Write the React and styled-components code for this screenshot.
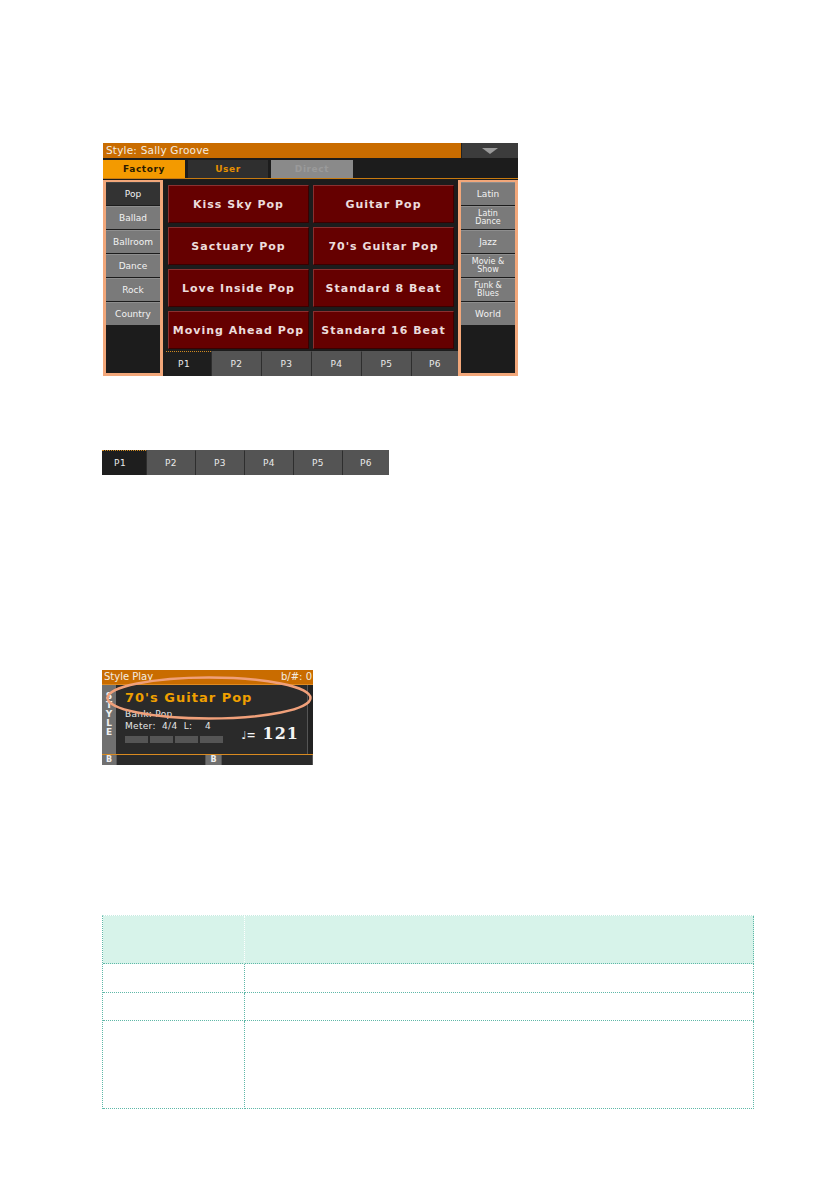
import React from "react";
import styled, { createGlobalStyle } from "styled-components";

const Global = createGlobalStyle`
  html, body { margin: 0; padding: 0; background: #fff; }
  body { font-family: "DejaVu Sans", "Liberation Sans", sans-serif; }
`;

const Page = styled.div`
  width: 839px;
  min-height: 1191px;
  padding: 143px 0 0 102px;
  box-sizing: border-box;
  display: flex;
  flex-direction: column;
  align-items: flex-start;
`;

/* ---------- Screen 1 ---------- */
const Screen = styled.div`
  margin-left: 1px;
  width: 415px;
  height: 233px;
  background: #1c1c1c;
  display: flex;
  flex-direction: column;
  font-family: "DejaVu Sans", sans-serif;
`;

const TitleBar = styled.div`
  height: 15px;
  display: flex;
`;

const TitleText = styled.div`
  flex: 1;
  background: #c96c00;
  color: #f4ece0;
  font-size: 10.5px;
  line-height: 15px;
  padding-left: 3px;
  letter-spacing: 0.2px;
`;

const MenuButton = styled.div`
  width: 56px;
  background: #3c3c3c;
  border-left: 1px solid #222;
  display: flex;
  align-items: center;
  justify-content: center;
`;

const TabsRow = styled.div`
  height: 18px;
  margin-top: 2px;
  display: flex;
  gap: 3px;
  border-bottom: 1px solid #c77a10;
`;

const Tab = styled.div`
  width: ${(p) => p.$w}px;
  background: ${(p) => (p.$active ? "#f39a00" : p.$disabled ? "#8a8a8a" : "#2f2f2f")};
  color: ${(p) => (p.$active ? "#2a1a00" : p.$disabled ? "#9a9a9a" : "#e59000")};
  font-size: 9px;
  font-weight: bold;
  letter-spacing: 0.6px;
  text-align: center;
  line-height: 18px;
`;

const Main = styled.div`
  flex: 1;
  display: flex;
  margin-top: 1px;
`;

const SideColumn = styled.div`
  width: 60px;
  box-sizing: border-box;
  border: 3px solid #f2a77a;
  border-top-width: 2px;
  background: #1c1c1c;
  display: flex;
  flex-direction: column;
  gap: 1px;
`;

const SideButton = styled.div`
  height: 23px;
  background: ${(p) => (p.$selected ? "#333" : "#7a7a7a")};
  border-top: 1px solid ${(p) => (p.$selected ? "#444" : "#8e8e8e")};
  color: #f2f2f2;
  font-size: ${(p) => (p.$two ? "8px" : "9px")};
  line-height: ${(p) => (p.$two ? "8px" : "21px")};
  text-align: center;
  display: flex;
  flex-direction: column;
  justify-content: center;
  box-sizing: border-box;
  white-space: pre-line;
`;

const Center = styled.div`
  flex: 1;
  display: flex;
  flex-direction: column;
  padding: 3px 0 0 3px;
`;

const Grid = styled.div`
  display: grid;
  grid-template-columns: 141px 141px;
  grid-auto-rows: 38px;
  column-gap: 4px;
  row-gap: 4px;
  padding: 2px 0 0 2px;
`;

const StyleButton = styled.div`
  background: #650000;
  border: 1px solid #8a3030;
  border-right-color: #3a0000;
  border-bottom-color: #3a0000;
  box-sizing: border-box;
  color: #ecdcdc;
  font-size: 11px;
  font-weight: bold;
  letter-spacing: 1px;
  display: flex;
  align-items: center;
  justify-content: center;
  white-space: nowrap;
`;

const PageBar = styled.div`
  display: flex;
  height: ${(p) => p.$h}px;
  margin-top: ${(p) => p.$mt || 0}px;
`;

const PageTab = styled.div`
  width: ${(p) => p.$w}px;
  box-sizing: border-box;
  background: ${(p) => (p.$active ? "#1e1e1e" : "#545454")};
  border-left: ${(p) => (p.$active ? "none" : "1px solid #2e2e2e")};
  border-top: 1px dotted ${(p) => (p.$active ? "#d08a20" : "#545454")};
  color: #eaeaea;
  font-size: 9px;
  letter-spacing: 0.5px;
  display: flex;
  align-items: center;
  justify-content: ${(p) => (p.$active ? "flex-start" : "center")};
  padding-left: ${(p) => (p.$active ? "12px" : "0")};
`;

/* ---------- Screen 3 ---------- */
const PlayScreen = styled.div`
  margin-top: 195px;
  width: 211px;
  height: 95px;
  background: #2a2a2a;
  display: flex;
  flex-direction: column;
  position: relative;
  overflow: hidden;
`;

const PlayTitle = styled.div`
  height: 14px;
  background: #c96c00;
  color: #f4ece0;
  font-size: 10px;
  line-height: 14px;
  padding: 0 1px 0 2px;
  display: flex;
  justify-content: space-between;
  border-bottom: 1px solid #e08a20;
`;

const PlayBody = styled.div`
  height: 72px;
  display: flex;
  border-bottom: 1px solid #d98a20;
`;

const VerticalLabel = styled.div`
  width: 14px;
  background: #707070;
  color: #f0f0f0;
  font-size: 9px;
  font-weight: bold;
  line-height: 9px;
  display: flex;
  flex-direction: column;
  align-items: center;
  padding-top: 7px;
`;

const Info = styled.div`
  flex: 1;
  padding: 5px 0 0 9px;
  display: flex;
  flex-direction: column;
  border-right: 1px solid #555;
`;

const StyleName = styled.div`
  color: #f0a000;
  font-size: 13px;
  font-weight: bold;
  letter-spacing: 1px;
  line-height: 15px;
`;

const Small = styled.div`
  color: #e6e6e6;
  font-size: 9px;
  line-height: 12px;
  letter-spacing: 0.3px;
  white-space: pre;
  margin-top: ${(p) => p.$mt || 0}px;
`;

const MeterRow = styled.div`
  display: flex;
  align-items: flex-end;
  justify-content: space-between;
  padding-right: 8px;
`;

const Bars = styled.div`
  display: flex;
  gap: 2px;
  margin-top: 4px;
`;

const Bar = styled.div`
  width: 23px;
  height: 7px;
  background: #555;
`;

const Tempo = styled.div`
  color: #f4f4f4;
  font-family: "DejaVu Serif", "Liberation Serif", serif;
  font-weight: bold;
  font-size: 16px;
  letter-spacing: 1px;
  display: flex;
  align-items: baseline;
  gap: 7px;
  margin-top: -8px;
`;

const TempoNote = styled.span`
  font-size: 11px;
  letter-spacing: 0;
`;

const RightEdge = styled.div`
  width: 5px;
  background: #222;
`;

const BottomRow = styled.div`
  flex: 1;
  display: flex;
`;

const BottomCell = styled.div`
  width: ${(p) => (p.$w ? p.$w + "px" : "auto")};
  flex: ${(p) => (p.$w ? "none" : 1)};
  background: ${(p) => (p.$label ? "#707070" : "#2a2a2a")};
  color: #eee;
  font-size: 8px;
  font-weight: bold;
  text-align: center;
  line-height: 10px;
  border-right: 1px solid #555;
`;

const Oval = styled.svg`
  position: absolute;
  left: 3px;
  top: 5px;
  pointer-events: none;
`;

/* ---------- Table ---------- */
const Table = styled.div`
  margin-top: 150px;
  width: 651px;
  display: grid;
  grid-template-columns: 142px 1fr;
  grid-template-rows: 48px 29px 28px 88px;
  border-left: 1px dotted #5fb8a8;
  border-top: 1px dotted #c8ece2;
`;

const Cell = styled.div`
  background: ${(p) => (p.$head ? "#d7f3ea" : "#fff")};
  border-right: 1px dotted ${(p) => (p.$head ? "#ffffff" : "#5fb8a8")};
  border-bottom: 1px dotted #5fb8a8;
  box-sizing: border-box;
  &:nth-child(2n) {
    border-right: 1px dotted #5fb8a8;
  }
`;

const Triangle = () => (
  <svg width="16" height="6" viewBox="0 0 16 6">
    <path d="M0 0 H16 L8 6 Z" fill="#9a9a9a" />
  </svg>
);

const leftGenres = [
  { t: "Pop", s: true },
  { t: "Ballad" },
  { t: "Ballroom" },
  { t: "Dance" },
  { t: "Rock" },
  { t: "Country" },
];
const rightGenres = [
  { t: "Latin" },
  { t: "Latin\nDance", two: true },
  { t: "Jazz" },
  { t: "Movie &\nShow", two: true },
  { t: "Funk &\nBlues", two: true },
  { t: "World" },
];
const styles = [
  "Kiss Sky Pop",
  "Guitar Pop",
  "Sactuary Pop",
  "70's Guitar Pop",
  "Love Inside Pop",
  "Standard 8 Beat",
  "Moving Ahead Pop",
  "Standard 16 Beat",
];
const pages = ["P1", "P2", "P3", "P4", "P5", "P6"];

export default function App() {
  return (
    <>
      <Global />
      <Page>
        <Screen>
          <TitleBar>
            <TitleText>Style: Sally Groove</TitleText>
            <MenuButton>
              <Triangle />
            </MenuButton>
          </TitleBar>
          <TabsRow>
            <Tab $w={82} $active>Factory</Tab>
            <Tab $w={80}>User</Tab>
            <Tab $w={82} $disabled>Direct</Tab>
          </TabsRow>
          <Main>
            <SideColumn>
              {leftGenres.map((g) => (
                <SideButton key={g.t} $selected={g.s}>
                  {g.t}
                </SideButton>
              ))}
            </SideColumn>
            <Center>
              <Grid>
                {styles.map((s) => (
                  <StyleButton key={s}>{s}</StyleButton>
                ))}
              </Grid>
              <PageBar $h={25} $mt={2}>
                {pages.map((p, i) => (
                  <PageTab key={p} $active={i === 0} $w={i === 0 ? 45 : i === 5 ? 47 : 50}>
                    {p}
                  </PageTab>
                ))}
              </PageBar>
            </Center>
            <SideColumn>
              {rightGenres.map((g) => (
                <SideButton key={g.t} $two={g.two}>
                  {g.t}
                </SideButton>
              ))}
            </SideColumn>
          </Main>
        </Screen>

        <PageBar $h={25} $mt={74}>
          {pages.map((p, i) => (
            <PageTab key={p} $active={i === 0} $w={i === 0 ? 44 : i === 5 ? 47 : 49}>
              {p}
            </PageTab>
          ))}
        </PageBar>

        <PlayScreen>
          <PlayTitle>
            <span>Style Play</span>
            <span>b/#: 0</span>
          </PlayTitle>
          <PlayBody>
            <VerticalLabel>
              <span>S</span>
              <span>T</span>
              <span>Y</span>
              <span>L</span>
              <span>E</span>
            </VerticalLabel>
            <Info>
              <StyleName>70's Guitar Pop</StyleName>
              <Small $mt={3}>Bank: Pop</Small>
              <Small>Meter:  4/4  L:    4</Small>
              <MeterRow>
                <Bars>
                  <Bar />
                  <Bar />
                  <Bar />
                  <Bar />
                </Bars>
                <Tempo>
                  <TempoNote>♩=</TempoNote>
                  <span>121</span>
                </Tempo>
              </MeterRow>
            </Info>
            <RightEdge />
          </PlayBody>
          <BottomRow>
            <BottomCell $w={14} $label>B</BottomCell>
            <BottomCell $w={88} />
            <BottomCell $w={15} $label>B</BottomCell>
            <BottomCell />
          </BottomRow>
          <Oval width="208" height="46" viewBox="0 0 208 46">
            <ellipse cx="104" cy="23" rx="101.5" ry="20.5" fill="none" stroke="#f0a07a" strokeWidth="2.5" />
          </Oval>
        </PlayScreen>

        <Table>
          <Cell $head />
          <Cell $head />
          <Cell />
          <Cell />
          <Cell />
          <Cell />
          <Cell />
          <Cell />
        </Table>
      </Page>
    </>
  );
}
